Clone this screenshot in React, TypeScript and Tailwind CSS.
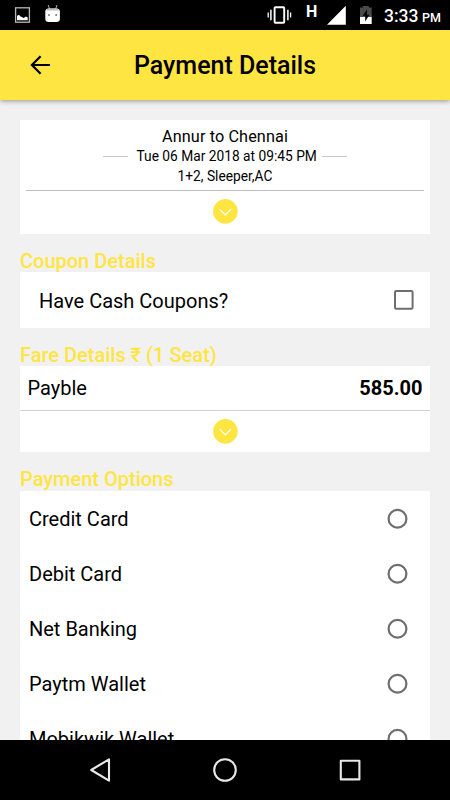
import React from "react";

function ExpandButton() {
  return (
    <svg className="block shrink-0" width="25" height="25" viewBox="0 0 25 25" fill="none">
      <circle cx="12.4" cy="12.4" r="12.3" fill="#ffe541" />
      <path d="M6.6 10.1l5.7 5.9 5.7-5.9" stroke="#fff" strokeWidth="1.2" />
    </svg>
  );
}

function Radio() {
  return (
    <svg className="block shrink-0" width="21" height="21" viewBox="0 0 21 21" fill="none">
      <circle cx="10.5" cy="10.8" r="8.9" stroke="#6e6e6e" strokeWidth="2.2" />
    </svg>
  );
}

function Checkbox() {
  return (
    <svg className="block shrink-0" width="20" height="20" viewBox="0 0 20 20" fill="none">
      <rect x="1" y="1" width="17.6" height="17.8" rx="1.2" stroke="#6e6e6e" strokeWidth="2" />
    </svg>
  );
}

function StatusBar() {
  return (
    <div className="flex h-[30px] shrink-0 bg-black text-white">
      <svg className="block" width="75" height="30" viewBox="0 0 75 30">
        <rect x="15.6" y="7.8" width="13.8" height="14.4" fill="none" stroke="#b8b8b8" strokeWidth="1.3" />
        <path d="M17 20.3v-4.4l1.2-.9 1.3.3 1 1.3 1.4.3 1.5 1 1.5-.7.9-.8 1.9 1v2.9z" fill="#fff" />
        <path d="M48.2 5l1.3 4M57 5l-1.3 4" stroke="#aaa" strokeWidth="1" />
        <path d="M45.3 11.5q0-3 3.6-3h7.4q3.6 0 3.6 3v7.3q0 3.2-3.6 3.2h-7.4q-3.6 0-3.6-3.2z" fill="#fff" />
        <path d="M46 10.5q.5-2 3-2h7.2q2.5 0 3 2z" fill="#bbb" />
        <circle cx="49" cy="15" r="1" fill="#777" />
        <circle cx="56.2" cy="15" r="1" fill="#777" />
      </svg>
      <div className="flex-1" />
      <svg className="block" width="34" height="30" viewBox="0 0 34 30" fill="none" stroke="#fff">
        <rect x="8.6" y="7.2" width="9.6" height="15.6" rx=".8" strokeWidth="1.9" />
        <path d="M4.9 9.8v10.5M21.9 9.8v10.5" strokeWidth="1.5" />
        <path d="M2.2 12.5v5M24.6 12.5v5" strokeWidth="1.3" />
      </svg>
      <div className="w-6 pt-[3px] pl-[6px] font-bold text-[16px] leading-[17px]">H</div>
      <svg className="block" width="60" height="30" viewBox="0 0 60 30">
        <path d="M3 24.7L21.8 5.8v18.9z" fill="#fff" />
        <path d="M36 7.5h2.8V6h6V7.5h2.9V17H36z" fill="#4a4a4a" />
        <path d="M36 17h11.7v7H36z" fill="#fff" />
        <path d="M42.9 9.5l-4.2 6.3h2.5v5.7l4.2-6.8h-2.5z" fill="#000" />
      </svg>
      <div className="flex w-[66px] items-baseline gap-[4px] pt-[6px] font-medium">
        <span className="w-[34px] text-[17.5px] leading-5">3:33</span>
        <span className="text-[12.5px] leading-5">PM</span>
      </div>
    </div>
  );
}

function SectionTitle({ children, space = "pb-px" }: { children: React.ReactNode; space?: string }) {
  return (
    <h2 className={`${space} pt-[17px] text-[20px] leading-5 font-medium whitespace-nowrap text-[#ffe541]`}>
      {children}
    </h2>
  );
}

const options = ["Credit Card", "Debit Card", "Net Banking", "Paytm Wallet", "Mobikwik Wallet"];

export default function App() {
  return (
    <div className="flex h-[800px] w-[450px] flex-col overflow-hidden bg-[#f1f1f1] font-['Roboto','Noto_Sans',sans-serif] text-black">
      <StatusBar />
      <header className="relative flex h-[70px] shrink-0 items-center bg-[#ffe541] shadow-[0_1px_5px_rgba(0,0,0,0.4)]">
        <svg className="ml-[30px] block" width="20" height="20" viewBox="0 0 20 20" fill="none" stroke="#000" strokeWidth="2.2">
          <path d="M10.6 1.2L1.9 10l8.7 8.8M1.5 10H20" />
        </svg>
        <h1 className="ml-[84px] pt-px text-[25px] leading-[30px] font-medium whitespace-nowrap">Payment Details</h1>
      </header>

      <main className="min-h-0 flex-1 overflow-hidden px-5 pt-5">
        <section className="flex h-[114px] flex-col items-center bg-white px-1.5 pt-[7px]">
          <p className="text-[16.25px] leading-5 tracking-[0.1px]">Annur to Chennai</p>
          <div className="flex h-5 w-full items-start pl-[76.5px]">
            <div className="mt-[9px] h-px w-[25px] bg-[#c8c8c8]" />
            <p className="-mt-px mr-[6px] ml-[7px] w-[181px] pl-[2px] text-[13.75px] leading-5 whitespace-nowrap">Tue 06 Mar 2018 at 09:45 PM</p>
            <div className="mt-[9px] h-px w-[25px] bg-[#c8c8c8]" />
          </div>
          <p className="-mt-px h-[24px] text-[13.75px] leading-5">1+2, Sleeper,AC</p>
          <div className="mb-[8px] h-px w-full bg-[#bdbdbd]" />
          <ExpandButton />
        </section>

        <SectionTitle>Coupon Details</SectionTitle>
        <section className="flex h-[56px] items-center justify-between bg-white pr-4 pl-[19px]">
          <span className="pt-px text-[20px]">Have Cash Coupons?</span>
          <Checkbox />
        </section>

        <SectionTitle>Fare Details ₹ (1 Seat)</SectionTitle>
        <section className="flex h-[86px] flex-col items-center bg-white">
          <div className="flex h-[44px] w-full items-center justify-between pr-[7.5px] pl-[7.5px] text-[20px]">
            <span>Payble</span>
            <span className="font-bold">585.00</span>
          </div>
          <div className="mb-[8px] h-px w-full bg-[#d2d2d2]" />
          <ExpandButton />
        </section>

        <SectionTitle space="pb-0.5">Payment Options</SectionTitle>
        <section className="bg-white">
          {options.map((name) => (
            <div key={name} className="flex h-[55px] items-center justify-between pr-[22px] pl-[9px]">
              <span className="pt-px text-[20px] whitespace-nowrap">{name}</span>
              <Radio />
            </div>
          ))}
        </section>
      </main>

      <nav className="relative flex h-[60px] shrink-0 items-center justify-center bg-black">
        <svg className="block" width="300" height="60" viewBox="0 0 300 60" fill="none" stroke="#e8e8e8" strokeWidth="2.1" strokeLinejoin="round">
          <path d="M34 19.3v21.4L16.2 30z" />
          <circle cx="150" cy="30" r="10.8" />
          <rect x="265.8" y="20.8" width="18.6" height="18.6" />
        </svg>
      </nav>
    </div>
  );
}
